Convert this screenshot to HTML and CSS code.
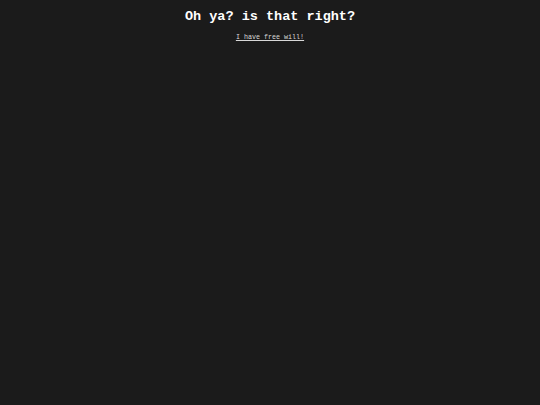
FILE: index.html
```html
<!DOCTYPE html>
<html>
<head>
<meta charset="utf-8">
<link rel="stylesheet" href="styles.css">
</head>
<body>
<main class="page">
  <h1 class="title">Oh ya? is that right?</h1>
  <a class="link" href="#">I have free will!</a>
</main>
</body>
</html>
```
FILE: styles.css
```css
html, body {
  margin: 0;
  padding: 0;
  background: #1b1b1b;
  height: 100%;
}
.page {
  display: flex;
  flex-direction: column;
  align-items: center;
  padding-top: 9px;
  font-family: "Liberation Mono", monospace;
  color: #ffffff;
}
.title {
  margin: 0;
  font-size: 13.5px;
  font-weight: bold;
  line-height: 16px;
}
.link {
  margin-top: 8px;
  font-size: 6.7px;
  color: #d8d8d8;
  text-decoration: underline;
}
```
